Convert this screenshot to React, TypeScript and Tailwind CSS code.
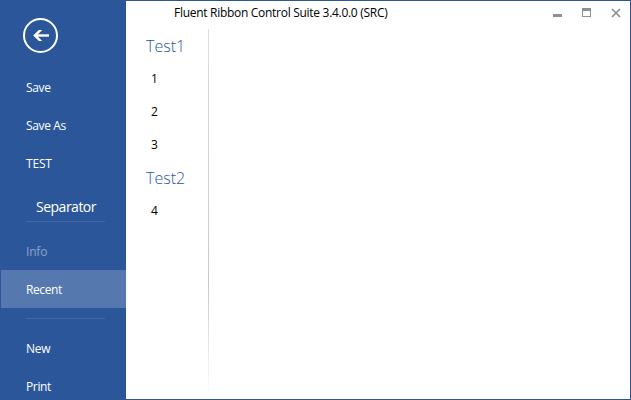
const font = "font-['Open_Sans','Noto_Sans',sans-serif]";

function NavItem({ label, width, state = "" }: { label: string; width: string; state?: string }) {
  return (
    <button className={`flex h-[38px] w-full shrink-0 items-center pl-[25px] text-left text-[12px] leading-[16px] ${state || "text-white"}`}>
      <span className={`whitespace-nowrap ${width}`}>{label}</span>
    </button>
  );
}

function Sidebar() {
  return (
    <nav className="flex h-full w-[125px] shrink-0 flex-col overflow-hidden bg-[#2b579a]">
      <button className="ml-[22px] mt-[17px] h-[35px] w-[35px] shrink-0" aria-label="Back">
        <svg width="35" height="35" viewBox="0 0 35 35" fill="none" stroke="#fff">
          <circle cx="17.5" cy="17.5" r="16.5" strokeWidth="2" />
          <path d="M12.5 17.5H26" strokeWidth="2.4" />
          <path d="M10.2 17.5L15.8 12H19.2L13.8 17.5L19.2 23H15.8Z" fill="#fff" stroke="none" />
        </svg>
      </button>
      <div className="mt-[16px] flex shrink-0 flex-col">
        <NavItem label="Save" width="tracking-[-0.35px]" />
        <NavItem label="Save As" width="tracking-[-0.35px]" />
        <NavItem label="TEST" width="tracking-[-0.2px]" />
      </div>
      <div className="ml-[25px] mt-[15px] h-[24px] w-[79px] shrink-0 border-b border-[#4068a5] pl-[10px] text-[14px] font-medium leading-[17px] tracking-[-0.5px] text-white">
        Separator
      </div>
      <div className="mt-[10px] flex shrink-0 flex-col">
        <NavItem label="Info" width="tracking-[-0.2px]" state="pt-[2px] text-[#8ba5cb]" />
        <NavItem label="Recent" width="tracking-[-0.4px]" state="bg-[#5578ae] pt-[2px] text-white" />
      </div>
      <div className="ml-[25px] mt-[10px] h-px w-[79px] shrink-0 bg-[#4068a5]" />
      <div className="mt-[11px] flex shrink-0 flex-col">
        <NavItem label="New" width="tracking-[-0.3px]" />
        <NavItem label="Print" width="tracking-[-0.35px]" />
      </div>
    </nav>
  );
}

function Group({ title, items }: { title: string; items: string[] }) {
  return (
    <section>
      <h2 className="h-[33px] pl-[20px] text-[16px] font-light leading-[35px] text-[#2b579a]">{title}</h2>
      {items.map((item) => (
        <div key={item} className="h-[33px] pl-[25px] text-[12px] leading-[33px] text-black">{item}</div>
      ))}
    </section>
  );
}

export default function App() {
  return (
    <div className={`relative flex h-[400px] w-[631px] overflow-hidden border border-[#2b579a] bg-white ${font}`}>
      <Sidebar />
      <main className="flex min-w-0 flex-1 flex-col">
        <header className="flex h-[28px] shrink-0 items-start justify-between pl-[48px] pr-[9px]">
          <h1 className="mt-[4px] whitespace-nowrap text-[12px] leading-[16px] tracking-[-0.29px] text-black">
            Fluent Ribbon Control Suite 3.4.0.0 (SRC)
          </h1>
          <svg className="mt-[7px]" width="68" height="10" viewBox="0 0 68 10" fill="#8f8f8f" shapeRendering="crispEdges">
            <path d="M0 6h9v3H0z" />
            <path d="M29 0h9v9h-9zM30 3v5h7V3z" fillRule="evenodd" />
            <path d="M59 1L67 9M67 1L59 9" stroke="#8f8f8f" strokeWidth="1.7" shapeRendering="auto" />
          </svg>
        </header>
        <div className="flex min-h-0 flex-1">
          <div className="w-[82px] shrink-0">
            <Group title="Test1" items={["1", "2", "3"]} />
            <Group title="Test2" items={["4"]} />
          </div>
          <div className="h-[366px] w-px bg-linear-to-b from-[#dedede] via-[#c8c8c8] via-70% to-white" />
        </div>
      </main>
      <span className="absolute -bottom-px left-[25px] h-px w-px bg-black" />
    </div>
  );
}
